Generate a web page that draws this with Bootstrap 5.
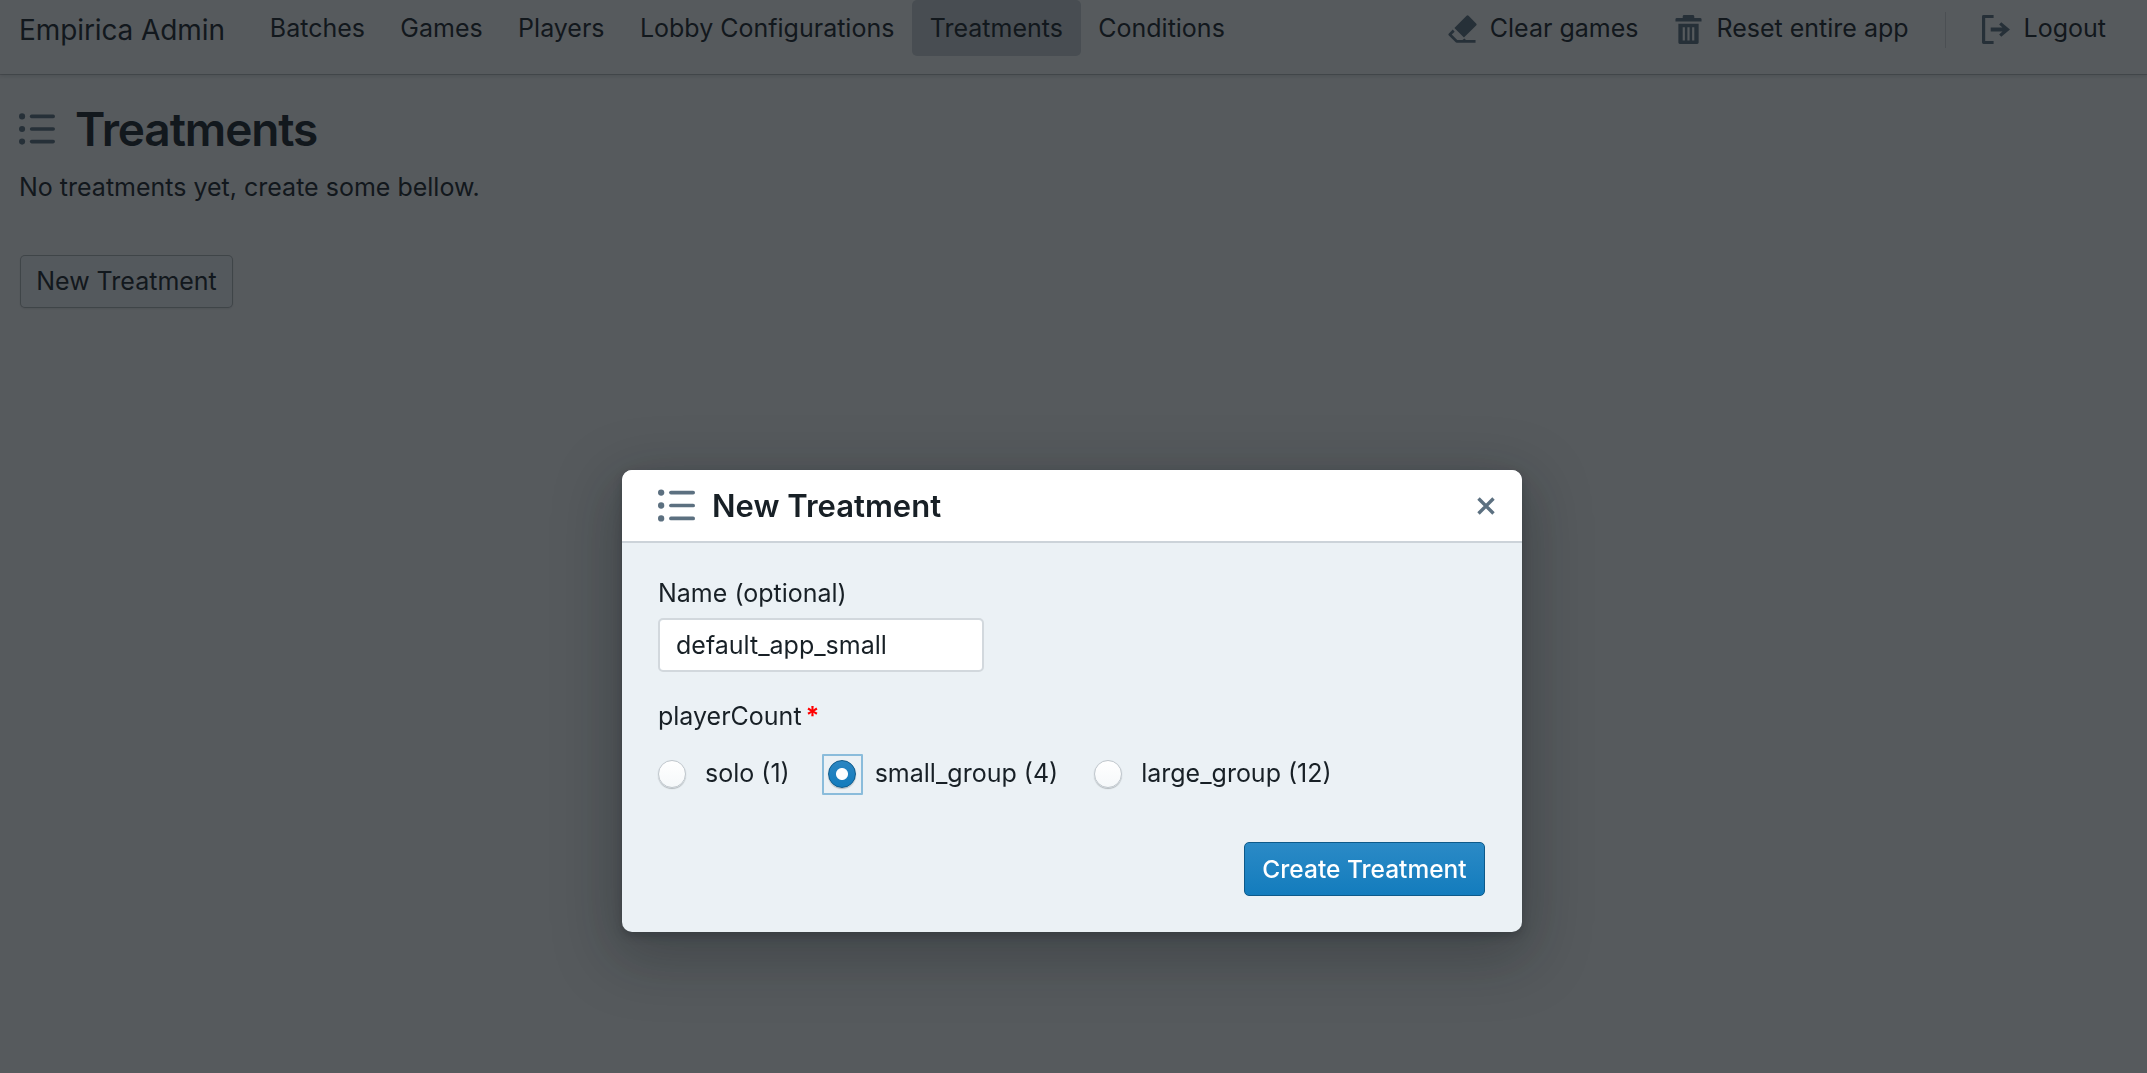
<!DOCTYPE html>
<html lang="en">
<head>
    <meta charset="UTF-8">
    <meta name="viewport" content="width=device-width, initial-scale=1.0">
    <title>Treatments - Empirica Admin</title>
    <link rel="stylesheet" href="https://cdn.jsdelivr.net/npm/bootstrap@5.3.0/dist/css/bootstrap.min.css">
    <style>
        body { background: #fbfbfb; color: #182026; font-family: Inter, "Noto Sans", sans-serif; font-size: 25px; height: 1073px; overflow: hidden; }
        .admin-bar { height: 74px; padding: 0 23px 0 19px; background: #fbfbfb; box-shadow: 0 1px 0 rgba(16,22,26,.2), 0 2px 4px rgba(16,22,26,.15); align-items: flex-start; }
        .admin-brand { font-size: 28px; line-height: 61px; margin-right: 27.3px; letter-spacing: -.1px; }
        .admin-link { height: 56px; padding: 2px 17.7px 0; display: flex; align-items: center; gap: 13px; color: #182026; text-decoration: none; border-radius: 5px; }
        .admin-link.current { background: rgba(92,112,128,.3); }
        .admin-link svg { width: 29px; height: 29px; fill: #5c7080; flex: none; }
        .bar-actions .admin-link { padding: 2px 18px 0; }
        .bar-divider { width: 1px; height: 36px; margin: 12px 18px; background: rgba(16,22,26,.15); }
        .page-title { font-size: 46px; font-weight: 600; line-height: 56px; margin: 0; letter-spacing: -1.1px; gap: 20px; }
        .page-title svg { width: 36px; height: 36px; fill: #5c7080; }
        .page-body { padding: 27px 19px 0; }
        .page-note { line-height: 36px; margin: 12px 0 50px; }
        .btn-plain { font-size: 25px; color: #182026; height: 53px; width: 213px; padding: 0; margin-left: 1px; background: #f5f8fa; border: 1px solid rgba(16,22,26,.3); border-radius: 5px; box-shadow: 0 1px 2px rgba(16,22,26,.1); }
        .modal-backdrop.show { background: #10161a; opacity: .7; }
        .treatment-dialog { max-width: 900px; width: 900px; margin: 470px 0 0 622px; }
        .treatment-dialog .modal-content { border: 0; border-radius: 10px; overflow: hidden; background: #ebf1f5; box-shadow: 0 4px 8px rgba(16,22,26,.25), 0 18px 60px 10px rgba(16,22,26,.28); }
        .treatment-dialog .modal-header { height: 73px; padding: 0 27px 0 36px; background: #fff; border-bottom: 2px solid #ccd3d9; border-radius: 0; gap: 17px; justify-content: flex-start; }
        .treatment-dialog .modal-header svg { width: 37px; height: 37px; fill: #5c7080; }
        .treatment-dialog .modal-title { font-size: 31px; font-weight: 600; line-height: 36px; flex: 1; }
        .close-x { width: 18px; height: 18px; padding: 0; border: 0; background: none; line-height: 0; }
        .close-x svg { width: 18px !important; height: 18px !important; stroke: #5c7080; stroke-width: 3.4; fill: none !important; display: block; }
        .treatment-dialog .modal-body { padding: 32px 37px 36px 36px; }
        .field-label { display: block; line-height: 36px; margin-bottom: 7px; }
        .name-input { width: 326px; height: 54px; font-size: 25px; font-family: inherit; color: #182026; padding: 0 16px; border: 2px solid #d2d8dd; border-radius: 5px; box-shadow: none; margin-bottom: 26px; }
        .req-mark { color: #f00; font-weight: 700; margin-left: -3px; }
        .radio-row { margin: 10px 0 0; height: 60px; align-items: center; }
        .radio-item { display: flex; align-items: center; margin: 0; padding: 0; min-height: 0; }
        .radio-item .form-check-input { float: none; width: 28px; height: 28px; margin: 0; border: 1px solid #bfc6cc; background: linear-gradient(#fff, #f5f8fa); box-shadow: 0 1px 1px rgba(16,22,26,.25); }
        .radio-item .form-check-input:checked { border-color: #0e5a8a; background: radial-gradient(circle, #fff 0 5.5px, transparent 6.5px), linear-gradient(#2b86c2, #137cbd); }
        .radio-item .form-check-input:focus { box-shadow: none; }
        .radio-item label { margin-left: 19px; }
        .radio-focus { width: 41px; height: 41px; border: 2px solid rgba(19,124,189,.45); border-radius: 1px; display: flex; align-items: center; justify-content: center; flex: none; }
        .radio-item .radio-focus + label { margin-left: 12px; }
        .radio-gap-a { margin-right: 32px; }
        .radio-gap-b { margin-right: 36px; }
        .create-row { margin-top: 38px; }
        .btn-create { height: 54px; width: 241px; padding: 0; font-size: 24.5px; font-weight: 500; color: #fff; background: linear-gradient(#2b8ac6, #137cbd); border: 1px solid #0e5a8a; border-radius: 5px; }
    </style>
</head>
<body>
    <svg width="0" height="0" class="d-block position-absolute">
        <symbol id="ic-list" viewBox="0 0 20 20"><circle cx="1.7" cy="3" r="1.7"/><circle cx="1.7" cy="10" r="1.7"/><circle cx="1.7" cy="17" r="1.7"/><rect x="6" y="2" width="14" height="2" rx="1"/><rect x="6" y="9" width="14" height="2" rx="1"/><rect x="6" y="16" width="14" height="2" rx="1"/></symbol>
    </svg>

    <!-- Navbar -->
    <nav class="admin-bar d-flex">
        <span class="admin-brand">Empirica Admin</span>
        <a class="admin-link" href="#">Batches</a>
        <a class="admin-link" href="#">Games</a>
        <a class="admin-link" href="#">Players</a>
        <a class="admin-link" href="#">Lobby Configurations</a>
        <a class="admin-link current" href="#">Treatments</a>
        <a class="admin-link" href="#">Conditions</a>
        <div class="bar-actions ms-auto d-flex">
            <a class="admin-link" href="#">
                <svg viewBox="0 0 20 20"><path d="M12.800 .6a1 1 0 0 1 1.400 0L19.400 5.800a1 1 0 0 1 0 1.400L11 15.500l-6.600-6.600zM3.300 10 .6 12.700a1 1 0 0 0 0 1.400L5.300 18.800a1 1 0 0 0 .7.300h13v-1.800h-6.600l-1.100-1.100-1.300 1.100H6.400l-3.800-3.800 2-2z"/></svg>
                Clear games
            </a>
            <a class="admin-link" href="#">
                <svg viewBox="0 0 20 20"><path d="M7 0h6a1 1 0 0 1 1 1v1h4a1 1 0 0 1 1 1v1.500H1V3a1 1 0 0 1 1-1h4V1a1 1 0 0 1 1-1zM3 6h14v13a1 1 0 0 1-1 1H4a1 1 0 0 1-1-1zm3 2.500v9h1.500v-9zm3.250 0v9h1.500v-9zm3.250 0v9H14v-9z"/></svg>
                Reset entire app
            </a>
            <div class="bar-divider"></div>
            <a class="admin-link" href="#">
                <svg viewBox="0 0 20 20"><path d="M1 0h7v2H2.200v16H8v2H1a1 1 0 0 1-1-1V1a1 1 0 0 1 1-1zm12.300 5 6 5-6 5-1.500-1.600 2.300-2H6V8.600h8.100l-2.300-2z"/></svg>
                Logout
            </a>
        </div>
    </nav>

    <!-- Page -->
    <main class="page-body">
        <h1 class="page-title d-flex align-items-center">
            <svg><use href="#ic-list"/></svg>
            Treatments
        </h1>
        <p class="page-note">No treatments yet, create some bellow.</p>
        <button type="button" class="btn btn-plain">New Treatment</button>
    </main>

    <!-- New Treatment dialog -->
    <div class="modal-backdrop show"></div>
    <div class="modal show d-block" tabindex="-1">
        <div class="modal-dialog treatment-dialog">
            <div class="modal-content">
                <div class="modal-header">
                    <svg><use href="#ic-list"/></svg>
                    <h5 class="modal-title">New Treatment</h5>
                    <button type="button" class="close-x" aria-label="Close">
                        <svg viewBox="0 0 18 18"><path d="M1.500 1.500 16.500 16.500M16.500 1.500 1.500 16.500"/></svg>
                    </button>
                </div>
                <div class="modal-body">
                    <label class="field-label" for="treatmentName">Name (optional)</label>
                    <input type="text" class="form-control name-input" id="treatmentName" value="default_app_small">
                    <div class="field-label mb-0">playerCount <span class="req-mark">*</span></div>
                    <div class="radio-row d-flex">
                        <div class="form-check radio-item radio-gap-a">
                            <input class="form-check-input" type="radio" name="playerCount" id="pcSolo">
                            <label class="form-check-label" for="pcSolo">solo (1)</label>
                        </div>
                        <div class="form-check radio-item radio-gap-b">
                            <span class="radio-focus"><input class="form-check-input" type="radio" name="playerCount" id="pcSmall" checked></span>
                            <label class="form-check-label" for="pcSmall">small_group (4)</label>
                        </div>
                        <div class="form-check radio-item">
                            <input class="form-check-input" type="radio" name="playerCount" id="pcLarge">
                            <label class="form-check-label" for="pcLarge">large_group (12)</label>
                        </div>
                    </div>
                    <div class="d-flex justify-content-end create-row">
                        <button type="button" class="btn btn-create">Create Treatment</button>
                    </div>
                </div>
            </div>
        </div>
    </div>

    <script src="https://cdn.jsdelivr.net/npm/bootstrap@5.3.0/dist/js/bootstrap.bundle.min.js"></script>
</body>
</html>
